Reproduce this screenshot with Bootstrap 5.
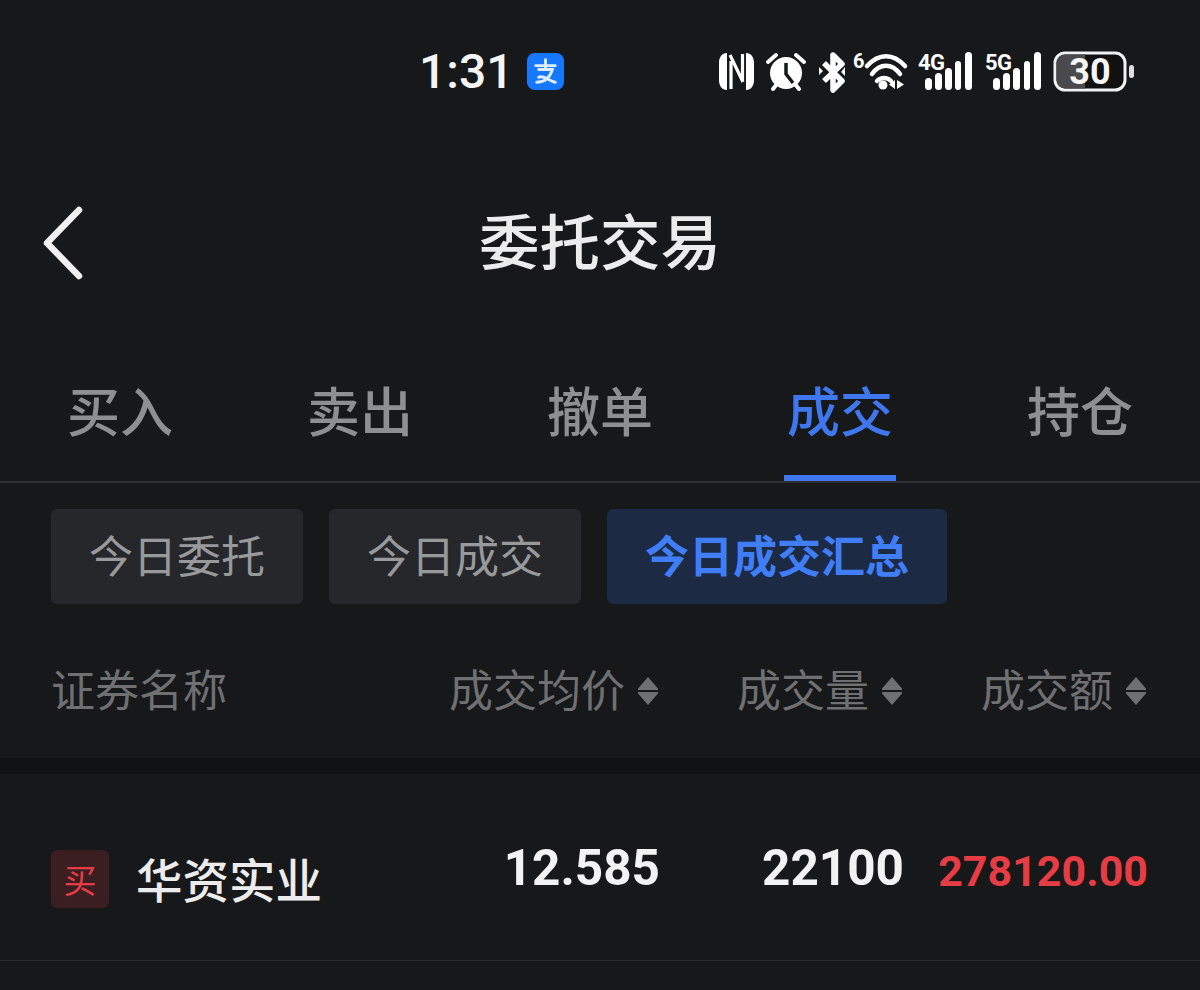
<!doctype html>
<html lang="zh"><head><meta charset="utf-8">
<link href="https://cdn.jsdelivr.net/npm/bootstrap@5.3.0/dist/css/bootstrap.min.css" rel="stylesheet">
<style>
html,body{height:990px;overflow:hidden}
body{background:#17181a;font-family:"Noto Sans CJK SC","Noto Sans",sans-serif;color:#f0f0f0;width:1200px}
.sbar{height:140px;padding-top:51px;position:relative}
.sbar svg{display:block;flex:none}
.clock{font-family:Roboto,"Liberation Sans",sans-serif;font-size:48px;font-weight:500;line-height:42px;width:108px;margin-left:419px;color:#f5f5f5}
.titlebar{height:210px;padding-top:55px;position:relative}
.ptitle{font-size:60.5px;line-height:88px;text-align:center;color:#ececec;font-weight:500;margin:0}
.backbtn{position:absolute;left:40px;top:65px}
.tabsrow{height:133px;border-bottom:2px solid #2c2e32}
.tabcell{width:240px;text-align:center}
.tablabel{display:inline-block;font-size:53px;font-weight:500;line-height:76px;color:#8e8f91;height:131px;padding:21px 3px 0}
.tablabel.on{color:#3f77ee;border-bottom:6px solid #3f77ee}
.chips{padding:26px 0 0 51px;gap:26px}
.chipbtn{height:95px;font-size:44px;line-height:90px;padding:0 38px;border-radius:6px;background:#25272b;color:#98999b}
.chipbtn.on{background:#1c2a44;color:#3f7ef7;font-weight:700}
.thead{height:154px;padding:14px 54px 0 51px;color:#6f7072;font-size:44px}
.thead .namecol,.trow .namecol{flex:1}
.hcell{width:244px;display:flex;justify-content:flex-end;align-items:center;gap:13px}
.hcell svg{display:block;margin-top:6px}
.strip{height:16px;background:#111214}
.trow{height:187px;border-bottom:1px solid #2a2c30;padding:24px 52px 0 51px}
.tag{width:58px;height:58px;background:#3a1e22;color:#e63c44;border-radius:6px;font-size:33px;line-height:58px;text-align:center;margin-right:27px}
.sname{font-size:46.5px;font-weight:500;line-height:58px;color:#ececec;margin-top:-3px}
.num{width:244px;text-align:right;font-family:Roboto,"Liberation Sans",sans-serif;font-weight:700;font-size:49.5px;line-height:58px;margin-bottom:23px;color:#f2f2f2}
.num.amt{color:#e63c44;font-size:43px;margin-bottom:17px}
.namecol{display:flex;align-items:center}
</style></head><body>
<div class="sbar d-flex align-items-start">
  <div class="clock">1:31</div>
  <svg width="37" height="37" viewBox="0 0 38 38" style="margin-top:2px"><rect width="38" height="38" rx="8" fill="#1677ff"/><path d="M9 13h20M19 7v10M10 30c6 0 13-3 16-13H12M12 25c5-3 10 4 17 5" fill="none" stroke="#dfeeff" stroke-width="3" stroke-linecap="round"/></svg>
  <svg width="420" height="50" viewBox="0 -4 420 50" style="margin-left:154px;margin-top:-4px" fill="#fff">
    <g transform="translate(1,2)"><path d="M8 0C3 0 0 4 0 10v17c0 6 3 10 8 10zM27 0v37c5 0 8-4 8-10V10c0-6-3-10-8-10z"/><path d="M12 36V8M11 2l13 27M23.500 1v27" fill="none" stroke="#fff" stroke-width="3.200"/></g>
    <g transform="translate(48,1)"><circle cx="20" cy="21" r="16"/><path d="M20 11v11l7 9" stroke="#17181a" stroke-width="3.500" fill="none"/><path d="M2 10l8-7M38 10l-8-7M7 37l4-5M33 37l-4-5" stroke="#fff" stroke-width="4" stroke-linecap="round" fill="none"/></g>
    <g transform="translate(100,1)"><path d="M6 11l18 18-9 9V3l9 9L6 29" fill="none" stroke="#fff" stroke-width="5.500" stroke-linejoin="round"/><path d="M1 15l4 4-4 4zM27 15v9l-4-4z"/></g>
    <text x="135" y="17" font-family="Roboto,sans-serif" font-size="20" font-weight="700">6</text>
    <g transform="translate(146,1)"><path d="M3 14c12-13 26-13 38 0M8 22c8-11 20-11 28 0M13 29c4-4 10-4 14 0" fill="none" stroke="#fff" stroke-width="4.500" stroke-linecap="round"/><circle cx="19" cy="33" r="4.500"/><path d="M31 28v9l-6-4.500zM33 28l7 4.500-7 4.500z"/></g>
    <text x="200" y="19" font-family="Roboto,sans-serif" font-size="22" font-weight="700" textLength="27">4G</text>
    <g><rect x="207" y="27" width="7" height="12" rx="3.500"/><rect x="217" y="22" width="7" height="17" rx="3.500"/><rect x="227" y="17" width="7" height="22" rx="3.500"/><rect x="237" y="10" width="6" height="29" rx="3"/><rect x="247" y="1" width="7" height="38" rx="3.500"/></g>
    <text x="267" y="19" font-family="Roboto,sans-serif" font-size="22" font-weight="700" textLength="27">5G</text>
    <g><rect x="275" y="27" width="7" height="12" rx="3.500"/><rect x="285" y="22" width="7" height="17" rx="3.500"/><rect x="295" y="17" width="7" height="22" rx="3.500"/><rect x="306" y="10" width="6" height="29" rx="3"/><rect x="316" y="1" width="7" height="38" rx="3.500"/></g>
    <rect x="337" y="2" width="70" height="37" rx="10" fill="#111" stroke="#f2f2f2" stroke-width="3"/>
    <path d="M347 3.500h20v34h-20a8.500 8.500 0 0 1-8.500-8.500v-17a8.500 8.500 0 0 1 8.500-8.500z" fill="#4a4a4c"/>
    <text x="372" y="33" text-anchor="middle" font-family="Roboto,sans-serif" font-size="36" font-weight="700" fill="#f5f5f5">30</text>
    <rect x="411" y="14" width="5" height="13" rx="2.500" fill="#dedede"/>
  </svg>
</div>
<div class="titlebar">
  <svg class="backbtn" width="46" height="76" viewBox="0 0 46 76"><path d="M39 5L7 38l32 33" fill="none" stroke="#f0f0f0" stroke-width="6.500" stroke-linecap="round" stroke-linejoin="round"/></svg>
  <h1 class="ptitle">委托交易</h1>
</div>
<div class="tabsrow d-flex">
  <div class="tabcell"><span class="tablabel">买入</span></div>
  <div class="tabcell"><span class="tablabel">卖出</span></div>
  <div class="tabcell"><span class="tablabel">撤单</span></div>
  <div class="tabcell"><span class="tablabel on">成交</span></div>
  <div class="tabcell"><span class="tablabel">持仓</span></div>
</div>
<div class="chips d-flex">
  <div class="chipbtn">今日委托</div>
  <div class="chipbtn">今日成交</div>
  <div class="chipbtn on">今日成交汇总</div>
</div>
<div class="thead d-flex align-items-center">
  <div class="namecol">证券名称</div>
  <div class="hcell">成交均价<svg width="20" height="28" viewBox="0 0 20 28"><path d="M10 0l9.500 11a1 1 0 0 1-1 2H1.500a1 1 0 0 1-1-2zM10 28L.5 17a1 1 0 0 1 1-2h17a1 1 0 0 1 1 2z" fill="#6f7072"/></svg></div>
  <div class="hcell">成交量<svg width="20" height="28" viewBox="0 0 20 28"><path d="M10 0l9.500 11a1 1 0 0 1-1 2H1.500a1 1 0 0 1-1-2zM10 28L.5 17a1 1 0 0 1 1-2h17a1 1 0 0 1 1 2z" fill="#6f7072"/></svg></div>
  <div class="hcell">成交额<svg width="20" height="28" viewBox="0 0 20 28"><path d="M10 0l9.500 11a1 1 0 0 1-1 2H1.500a1 1 0 0 1-1-2zM10 28L.5 17a1 1 0 0 1 1-2h17a1 1 0 0 1 1 2z" fill="#6f7072"/></svg></div>
</div>
<div class="strip"></div>
<div class="trow d-flex align-items-center">
  <div class="namecol"><div class="tag">买</div><div class="sname">华资实业</div></div>
  <div class="num">12.585</div>
  <div class="num">22100</div>
  <div class="num amt">278120.00</div>
</div>
<script src="https://cdn.jsdelivr.net/npm/bootstrap@5.3.0/dist/js/bootstrap.bundle.min.js"></script>
</body></html>
